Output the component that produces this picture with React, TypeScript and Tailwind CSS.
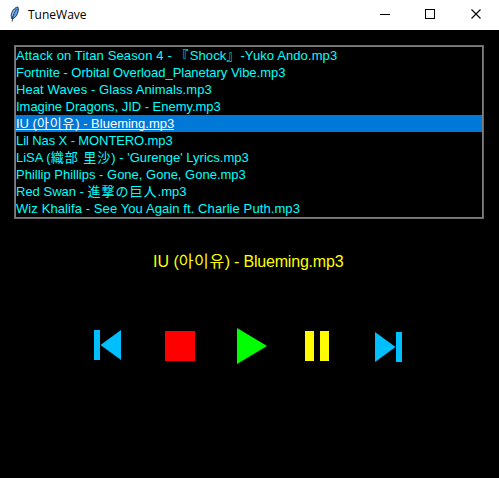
type Segment = { text: string; className: string };

const songs: Segment[][] = [
  [
    { text: "Attack on Titan Season 4 - ", className: "tracking-[0.13px]" },
    { text: "『", className: "tracking-[1px]" },
    { text: "Shock", className: "tracking-[0.13px]" },
    { text: "』", className: "tracking-[1px]" },
    { text: "-Yuko Ando.mp3", className: "tracking-[0.1px]" },
  ],
  [{ text: "Fortnite - Orbital Overload_Planetary Vibe.mp3", className: "tracking-[-0.03px]" }],
  [{ text: "Heat Waves - Glass Animals.mp3", className: "tracking-[0.09px]" }],
  [{ text: "Imagine Dragons, JID - Enemy.mp3", className: "tracking-[-0.03px]" }],
  [
    { text: "IU (", className: "" },
    { text: "아이유", className: "tracking-[0.8px]" },
    { text: ") - Blueming.mp3", className: "" },
  ],
  [{ text: "Lil Nas X - MONTERO.mp3", className: "tracking-[-0.1px]" }],
  [
    { text: "LiSA (", className: "" },
    { text: "織部 里沙", className: "tracking-[1px]" },
    { text: ") - 'Gurenge' Lyrics.mp3", className: "" },
  ],
  [{ text: "Phillip Phillips - Gone, Gone, Gone.mp3", className: "" }],
  [
    { text: "Red Swan - ", className: "" },
    { text: "進撃の巨人", className: "tracking-[1px]" },
    { text: ".mp3", className: "" },
  ],
  [{ text: "Wiz Khalifa - See You Again ft. Charlie Puth.mp3", className: "tracking-[0.09px]" }],
];

const selected = 4;

function Feather() {
  return (
    <svg width="16" height="16" viewBox="0 0 16 16">
      <path d="M5 13C3.4 10 4.4 5.5 7.4 2.8 8.8 1.4 10.2 0.9 11 1.2c.8 1.8.2 5.6-1.6 8.6-1 1.5-2.6 2.6-4.4 3.2z" fill="#5c9be6" stroke="#26384f" strokeWidth="1" />
      <path d="M9.4 3.2C7.4 5.6 5.8 9 5.2 15.5" fill="none" stroke="#1a2430" strokeWidth="0.9" />
      <path d="M8 4C6.6 5.6 5.6 7.6 5.4 9.6" fill="none" stroke="#b9d4f2" strokeWidth="1" />
    </svg>
  );
}

function TitleBar() {
  return (
    <header className="flex h-[30px] items-center bg-white text-black">
      <div className="ml-[7px] h-4 w-4 -translate-y-px">
        <Feather />
      </div>
      <h1 className="ml-[5px] flex-1 font-['Open_Sans','Noto_Sans',sans-serif] text-[12px] leading-4">TuneWave</h1>
      <svg width="139" height="30" viewBox="0 0 139 30" shapeRendering="crispEdges">
        <path d="M20 14.5H30" stroke="#000" />
        <rect x="65.5" y="9.5" width="9" height="9" fill="none" stroke="#000" />
        <path d="M111.5 9.5l9 9M120.5 9.5l-9 9" stroke="#000" shapeRendering="auto" strokeWidth="1.1" />
      </svg>
    </header>
  );
}

function Controls() {
  return (
    <div className="mt-[55px] flex h-9 pl-[94px]">
      <button aria-label="Previous" className="mt-[2px] h-[30px] w-[27px]">
        <svg width="27" height="30" fill="#00bfff">
          <path d="M0 0h6v30H0zM27 0v30L6.5 15z" />
        </svg>
      </button>
      <button aria-label="Stop" className="mt-[3px] ml-11 h-[30px] w-[30px] bg-[#ff0000]" />
      <button aria-label="Play" className="ml-[42px] h-9 w-[30px]">
        <svg width="30" height="36" fill="#00ff00">
          <path d="M0 0l30 18L0 36z" />
        </svg>
      </button>
      <button aria-label="Pause" className="mt-[3px] ml-[38px] flex h-[30px] w-6 justify-between">
        <span className="h-full w-[9px] bg-[#fffb00]" />
        <span className="h-full w-[9px] bg-[#fffb00]" />
      </button>
      <button aria-label="Next" className="mt-1 ml-[46px] h-[30px] w-[27px]">
        <svg width="27" height="30" fill="#00bfff">
          <path d="M21 0h6v30h-6zM0 0l20.5 15L0 30z" />
        </svg>
      </button>
    </div>
  );
}

export default function App() {
  return (
    <div className="flex h-[478px] w-[499px] flex-col overflow-hidden bg-black font-['Liberation_Sans','Noto_Sans_CJK_JP','Noto_Sans_CJK_KR',sans-serif]">
      <TitleBar />
      <div className="mt-[15px] ml-[14px] w-[470px] border border-[#696969]">
        <ul className="border border-[#808080] text-[13px] leading-[17px] text-[#00ffff]">
          {songs.map((segments, i) => (
            <li key={i} className={i === selected ? "h-[17px] bg-[#0078d7] text-white" : "h-[17px]"}>
              <span className={i === selected ? "block h-[15px] w-max border-b border-white whitespace-pre" : "block w-max whitespace-pre"}>
                {segments.map((s, j) => (
                  <span key={j} className={s.className}>{s.text}</span>
                ))}
              </span>
            </li>
          ))}
        </ul>
      </div>
      <p className="mt-8 mb-px h-[21px] pl-[153px] text-[16px] leading-[21px] whitespace-pre text-[#ffff00]">
        <span>IU (</span>
        <span className="tracking-[0.6px]">아이유</span>
        <span className="tracking-[-0.2px]">) - Blueming.mp3</span>
      </p>
      <Controls />
    </div>
  );
}
